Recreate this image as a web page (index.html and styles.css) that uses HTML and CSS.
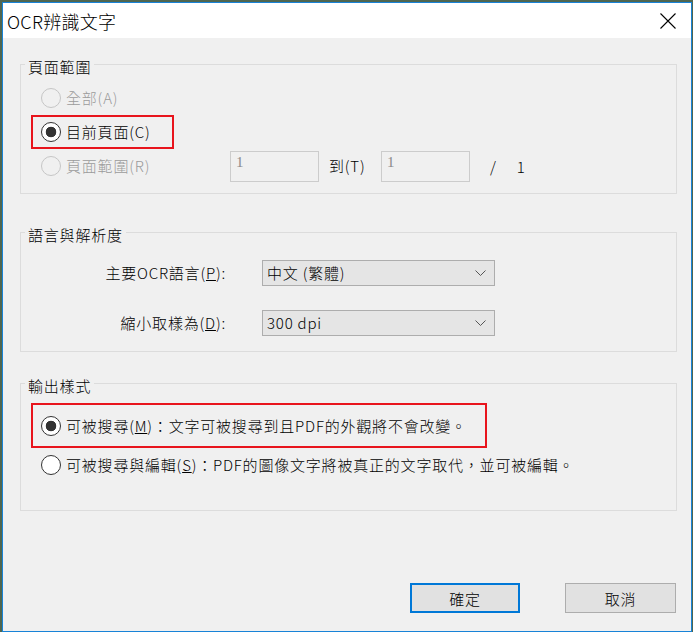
FILE: index.html
```html
<!DOCTYPE html>
<html lang="zh-Hant">
<head>
  <meta charset="UTF-8" />
  <title>OCR辨識文字</title>
  <link rel="stylesheet" href="styles.css">
</head>
<body>
  <div class="window">
    <div class="titlebar">
      <span class="title">OCR辨識文字</span>
      <svg class="close" width="16" height="16" viewBox="0 0 16 16">
        <path d="M0.5 0.5 L15.5 15.5 M15.5 0.5 L0.5 15.5" stroke="#000" stroke-width="1.1" fill="none"/>
      </svg>
    </div>

    <div class="content">
      <fieldset class="group">
        <legend>頁面範圍</legend>
        <div class="group-body range">
          <div class="row">
            <label class="option disabled"><input type="radio" name="range" disabled><span>全部(A)</span></label>
          </div>
          <div class="row">
            <label class="option marked small-mark"><input type="radio" name="range" checked><span>目前頁面(C)</span></label>
          </div>
          <div class="row">
            <label class="option disabled wide"><input type="radio" name="range" disabled><span>頁面範圍(R)</span></label>
            <input class="page-input" type="text" value="1" disabled>
            <span class="to">到(T)</span>
            <input class="page-input" type="text" value="1" disabled>
            <span class="slash">/</span>
            <span class="total">1</span>
          </div>
        </div>
      </fieldset>

      <fieldset class="group lang">
        <legend>語言與解析度</legend>
        <div class="group-body settings">
          <div class="field">
            <span class="field-label">主要OCR語言(<u>P</u>):</span>
            <div class="combo">
              <span>中文 (繁體)</span>
              <svg width="11" height="6" viewBox="0 0 11 6"><path d="M0.5 0.5 L5.5 5.5 L10.5 0.5" stroke="#555" fill="none"/></svg>
            </div>
          </div>
          <div class="field">
            <span class="field-label">縮小取樣為(<u>D</u>):</span>
            <div class="combo">
              <span>300 dpi</span>
              <svg width="11" height="6" viewBox="0 0 11 6"><path d="M0.5 0.5 L5.5 5.5 L10.5 0.5" stroke="#555" fill="none"/></svg>
            </div>
          </div>
        </div>
      </fieldset>

      <fieldset class="group output">
        <legend>輸出樣式</legend>
        <div class="group-body styles">
          <div class="row tall">
            <label class="option marked big-mark"><input type="radio" name="style" checked><span>可被搜尋(<u>M</u>)：文字可被搜尋到且PDF的外觀將不會改變。</span></label>
          </div>
          <div class="row">
            <label class="option"><input type="radio" name="style"><span>可被搜尋與編輯(<u>S</u>)：PDF的圖像文字將被真正的文字取代，並可被編輯。</span></label>
          </div>
        </div>
      </fieldset>

      <div class="buttons">
        <button class="btn default">確定</button>
        <button class="btn">取消</button>
      </div>
    </div>
  </div>
</body>
</html>
```

FILE: styles.css
```css
* {
  box-sizing: border-box;
}

body {
  margin: 0;
  background: #4f6650;
  font-family: "Noto Sans CJK TC", "Noto Sans", sans-serif;
  font-size: 15px;
  font-weight: 300;
  letter-spacing: 0.8px;
  color: #000;
}

.window {
  margin: 2px 0 0 2px;
  width: 690px;
  height: 630px;
  border: 1px solid #1883d7;
  background: #f0f0f0;
}

.titlebar {
  height: 35px;
  background: #fff;
  display: flex;
  align-items: center;
  justify-content: space-between;
  padding: 0 15px 0 4px;
}

.title {
  font-size: 18px;
  line-height: 24px;
  letter-spacing: 0.3px;
}

.content {
  padding: 13px 14px 0 17px;
}

.group {
  margin: 0;
  padding: 0;
  border: 1px solid #dcdcdc;
  min-width: 0;
}

.group legend {
  margin-left: 4px;
  padding: 6px 3px 0;
  line-height: 20px;
}

.group.lang {
  margin-top: 25px;
}

.group.output {
  margin-top: 18px;
}

.group-body {
  padding: 0 10px;
}

.range {
  padding-top: 4px;
  padding-bottom: 10px;
}

.row {
  display: flex;
  align-items: center;
  height: 34px;
}

.row.tall {
  height: 45px;
}

.option {
  display: flex;
  align-items: center;
  height: 100%;
  padding-left: 10px;
  line-height: 20px;
  white-space: nowrap;
}

.option span {
  margin-left: 5px;
}

.option.disabled {
  color: #9b9b9b;
}

.option.wide {
  width: 199px;
}

.option.marked {
  border: 2px solid #e8141c;
  padding-left: 8px;
}

.small-mark {
  width: 143px;
  height: 34px;
}

.big-mark {
  width: 456px;
  height: 45px;
}

.option input {
  appearance: none;
  -webkit-appearance: none;
  margin: 0;
  width: 20px;
  height: 20px;
  border: 1px solid #333;
  border-radius: 50%;
  background: #fff;
}

.option input:checked {
  background: radial-gradient(circle, #333 0 5px, #fff 5.6px);
}

.option input:disabled {
  border-color: #c6c6c6;
  background: #f0f0f0;
}

.page-input {
  width: 89px;
  height: 31px;
  margin: 0;
  border: 1px solid #cccccc;
  background: #f0f0f0;
  padding: 0 5px 8px;
  font-family: "Liberation Serif", serif;
  font-size: 15px;
  color: #8a8a8a;
}

.to {
  width: 62px;
  padding-left: 10px;
  line-height: 20px;
}

.slash {
  margin-left: 20px;
}

.total {
  margin-left: 20px;
}

.settings {
  padding-top: 15px;
  padding-bottom: 15px;
}

.field {
  display: flex;
  align-items: center;
  height: 26px;
}

.field + .field {
  margin-top: 24px;
}

.field-label {
  width: 195px;
  text-align: right;
  line-height: 20px;
}

.combo {
  margin-left: 36px;
  width: 233px;
  height: 26px;
  border: 1px solid #adadad;
  background: #e5e5e5;
  display: flex;
  align-items: center;
  justify-content: space-between;
  padding: 0 8px 0 4px;
  line-height: 20px;
}

.styles {
  padding-top: 7px;
  padding-bottom: 28px;
}

.buttons {
  display: flex;
  justify-content: flex-end;
  gap: 45px;
  margin-top: 72px;
  padding-right: 1px;
}

.btn {
  width: 111px;
  height: 30px;
  border: 1px solid #adadad;
  background: #e1e1e1;
  font-family: "Noto Sans CJK TC", sans-serif;
  font-size: 15px;
  font-weight: 300;
  letter-spacing: 0.8px;
  color: #000;
  padding: 0;
}

.btn.default {
  width: 110px;
  border: 2px solid #0078d7;
}
```
